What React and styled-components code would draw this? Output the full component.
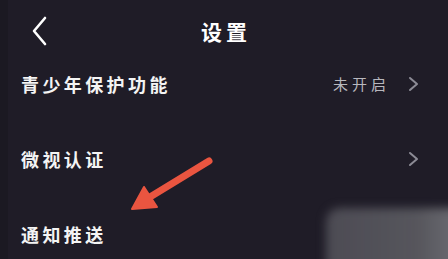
import styled, { createGlobalStyle } from 'styled-components';

const GlobalStyle = createGlobalStyle`
  html, body {
    margin: 0;
    padding: 0;
    background: #1f1c27;
  }
  body {
    font-family: "Noto Sans CJK SC", "Noto Sans", sans-serif;
  }
`;

const Screen = styled.div`
  position: relative;
  width: 448px;
  height: 259px;
  overflow: hidden;
  background: #1f1c27;
  box-shadow: inset 8px 0 0 #1b1922;
`;

const Header = styled.div`
  position: relative;
  height: 30px;
  padding-top: 16px;
  display: flex;
  align-items: center;
  justify-content: center;
`;

const BackButton = styled.div`
  position: absolute;
  left: 30px;
  top: 16px;
  width: 20px;
  height: 30px;
  display: flex;
  align-items: center;
  justify-content: center;
`;

const Title = styled.div`
  color: #ffffff;
  font-size: 21px;
  font-weight: 700;
  letter-spacing: 4px;
  margin-left: 4px;
`;

const Row = styled.div`
  height: 75px;
  padding: 0 26px 0 21px;
  display: flex;
  align-items: center;
  justify-content: space-between;
`;

const Label = styled.div`
  color: #f4f4f4;
  font-size: 18px;
  font-weight: 700;
  letter-spacing: 3.4px;
`;

const Right = styled.div`
  display: flex;
  align-items: center;
  gap: 16px;
`;

const Status = styled.div`
  color: #b8b8be;
  font-size: 15px;
  letter-spacing: 4px;
`;

const Overlay = styled.svg`
  position: absolute;
  left: 0;
  top: 0;
  pointer-events: none;
`;

const Watermark = styled.div`
  position: absolute;
  left: 326px;
  top: 208px;
  width: 150px;
  height: 70px;
  border-radius: 14px;
  background: linear-gradient(90deg, rgba(85, 84, 92, 0.85) 0%, rgba(92, 92, 98, 0.9) 60%, rgba(120, 120, 126, 0.95) 100%);
  filter: blur(5px);
`;

function Chevron({ color = '#8c8b95', dir = 'right', size = 16 }) {
  const d = dir === 'right' ? 'M4 2 L11 8 L4 14' : 'M14 2 L3 15 L14 28';
  const vb = dir === 'right' ? '0 0 16 16' : '0 0 18 30';
  return (
    <svg width={dir === 'right' ? size : 18} height={dir === 'right' ? size : 30} viewBox={vb}>
      <path d={d} fill="none" stroke={color} strokeWidth={dir === 'right' ? 2 : 2.6} strokeLinecap="round" strokeLinejoin="round" />
    </svg>
  );
}

export default function App() {
  return (
    <>
      <GlobalStyle />
      <Screen>
        <Header>
          <BackButton>
            <Chevron dir="left" color="#ffffff" />
          </BackButton>
          <Title>设置</Title>
        </Header>
        <Row>
          <Label>青少年保护功能</Label>
          <Right>
            <Status>未开启</Status>
            <Chevron />
          </Right>
        </Row>
        <Row>
          <Label>微视认证</Label>
          <Right>
            <Chevron />
          </Right>
        </Row>
        <Row>
          <Label>通知推送</Label>
        </Row>
        <Watermark />
        <Overlay width="448" height="259" viewBox="0 0 448 259">
          <line x1="209" y1="161" x2="150" y2="197" stroke="#ea5540" strokeWidth="7" strokeLinecap="round" />
          <polygon points="132,209 144,187 157,207" fill="#ea5540" stroke="#ea5540" strokeWidth="2" strokeLinejoin="round" />
        </Overlay>
      </Screen>
    </>
  );
}
